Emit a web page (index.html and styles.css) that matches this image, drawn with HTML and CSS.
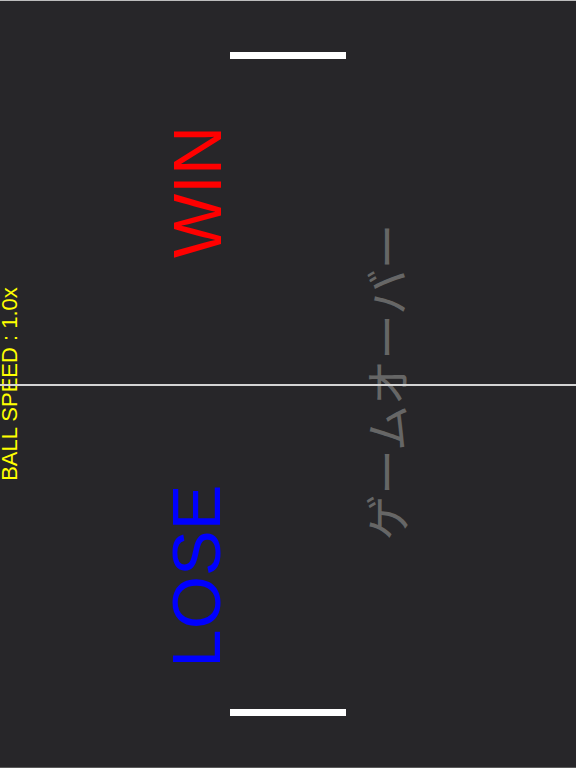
FILE: index.html
```html
<!DOCTYPE html>
<html lang="ja">
<head>
<meta charset="utf-8">
<title>Pong</title>
<link rel="stylesheet" href="styles.css">
</head>
<body>
<div class="game">
  <div class="paddle paddle-top"></div>
  <div class="label label-win">WIN</div>
  <div class="label label-lose">LOSE</div>
  <div class="label label-over">ゲームオーバー</div>
  <div class="label label-speed">BALL SPEED : 1.0x</div>
  <div class="midline"></div>
  <div class="paddle paddle-bottom"></div>
</div>
</body>
</html>
```
FILE: styles.css
```css
html, body {
  margin: 0;
  padding: 0;
  background: #272629;
}
.game {
  position: relative;
  width: 576px;
  height: 768px;
  overflow: hidden;
  background: #272629;
  box-shadow: inset 0 1px 0 #bdbdbd, inset 0 -1px 0 #5a5a5a;
  font-family: "Liberation Sans", Arial, sans-serif;
}
.paddle {
  position: absolute;
  left: 230px;
  width: 116px;
  height: 7px;
  background: #ffffff;
}
.paddle-top { top: 52px; }
.paddle-bottom { top: 709px; }
.midline {
  position: absolute;
  left: 0;
  top: 384px;
  width: 576px;
  height: 2px;
  background: #d4d4d4;
}
.label {
  position: absolute;
  line-height: 1;
  white-space: nowrap;
  transform: translate(-50%, -50%) rotate(-90deg);
}
.label-win {
  left: 196.5px;
  top: 191.5px;
  font-size: 68px;
  color: #ff0000;
}
.label-lose {
  left: 196.5px;
  top: 576px;
  font-size: 68.5px;
  color: #0000ff;
}
.label-over {
  left: 386px;
  top: 381.5px;
  font-size: 45.5px;
  font-weight: 400;
  color: #666666;
  font-family: "Noto Sans CJK JP", sans-serif;
}
.label-speed {
  left: 10px;
  top: 383.5px;
  font-size: 22px;
  color: #ffff00;
}
```
